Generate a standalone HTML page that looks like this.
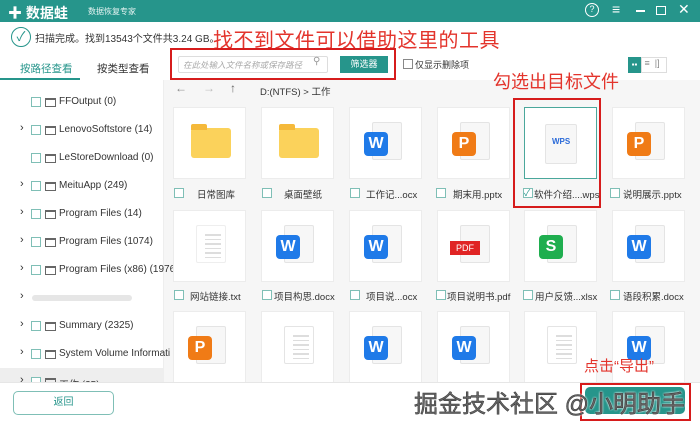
<!DOCTYPE html>
<html><head><meta charset="utf-8"><style>
*{margin:0;padding:0;box-sizing:border-box}
body{width:700px;height:425px;overflow:hidden;position:relative;font-family:"Liberation Sans","Noto Sans CJK SC",sans-serif;background:#fff;font-size:10px;color:#333}
.a{position:absolute}
.hdr{left:0;top:0;width:700px;height:22px;background:#26958b}
.cb{position:absolute;width:10px;height:10px;border:1px solid #7fbfb6;background:#fff}
.card{position:absolute;width:73px;height:72px;background:#fff;border:1px solid #ececec}
.lbl{position:absolute;font-size:9.5px;color:#333;white-space:nowrap}
.doc{position:absolute;left:22px;top:14px;width:30px;height:38px;background:#f7f7f7;border:1px solid #e4e4e4;border-radius:2px}
.ic{position:absolute;left:14px;top:24px;width:24px;height:24px;border-radius:4px;color:#fff;font-size:16px;font-weight:bold;text-align:center;line-height:24px}
.w{background:#1f7ae8}.p{background:#f07b16}.s{background:#1fae4f}
.fold{position:absolute;left:17px;top:20px;width:40px;height:30px;background:#fbd25b;border-radius:3px}
.fold:before{content:"";position:absolute;left:0;top:-4px;width:16px;height:6px;background:#f5b93a;border-radius:2px 2px 0 0}
.si{position:absolute;left:0;width:163px;height:28px;font-size:10px;color:#333}
.si .cb{left:31px;top:9px}
.si .fd{position:absolute;left:45px;top:10px;width:11px;height:9px;border:1px solid #666;border-top-width:2px}
.si span{position:absolute;left:59px;top:8px;white-space:nowrap}
.si b{position:absolute;left:20px;top:6px;font-weight:normal;font-size:11px}
.red{color:#e3342c;z-index:5}
.rb{position:absolute;border:2.5px solid #d61c1c;z-index:5}
.lines{position:absolute;left:8px;top:8px;width:16px}
.lines i{display:block;height:1.5px;background:#ddd;margin-bottom:3px}
</style></head><body>
<div class="a hdr"></div>
<div class="a" style="left:8px;top:3px;color:#fff;font-size:14px;font-weight:bold">✚ 数据蛙</div>
<div class="a" style="left:88px;top:6px;color:#e6f4f2;font-size:8px">数据恢复专家</div>
<div class="a" style="left:585px;top:3px;width:14px;height:14px;border:1.5px solid #fff;border-radius:50%;color:#fff;font-size:9px;text-align:center;line-height:11px">?</div>
<div class="a" style="left:612px;top:1px;color:#fff;font-size:14px">≡</div>
<div class="a" style="left:636px;top:10px;width:9px;height:1.5px;background:#fff"></div>
<div class="a" style="left:656px;top:6px;width:10px;height:9px;border:1.5px solid #fff"></div>
<div class="a" style="left:678px;top:1px;color:#fff;font-size:14px">✕</div>

<div class="a" style="left:11px;top:27px;width:20px;height:20px;border:1.5px solid #26958b;border-radius:50%;color:#26958b;text-align:center;font-size:13px;line-height:18px">✓</div>
<div class="a" style="left:35px;top:30px;font-size:10px">扫描完成。找到13543个文件共3.24 GB。</div>
<div class="a red" style="left:213px;top:24px;font-size:20px;letter-spacing:0.5px">找不到文件可以借助这里的工具</div>

<div class="a" style="left:20px;top:61px;color:#26958b;font-size:10.5px">按路径查看</div>
<div class="a" style="left:97px;top:61px;font-size:10.5px">按类型查看</div>
<div class="a" style="left:0;top:78px;width:80px;height:2px;background:#26958b"></div>
<div class="a" style="left:163px;top:80px;width:1px;height:303px;background:#eee"></div>

<div class="a" style="left:178px;top:56px;width:150px;height:17px;border:1px solid #ddd;border-radius:2px;background:#fff"></div>
<div class="a" style="left:183px;top:59px;font-size:8.5px;color:#aaa;font-style:italic">在此处输入文件名称或保存路径</div>
<div class="a" style="left:313px;top:56px;font-size:10px;color:#999">⚲</div>
<div class="a" style="left:340px;top:56px;width:48px;height:17px;background:#26958b;color:#fff;font-size:9px;text-align:center;line-height:17px">筛选器</div>
<div class="a cb" style="left:403px;top:59px;border-color:#888"></div>
<div class="a" style="left:415px;top:58px;font-size:9px">仅显示删除项</div>
<div class="a" style="left:628px;top:57px;width:13px;height:16px;background:#26958b;color:#fff;font-size:8px;text-align:center;line-height:16px">▪▪</div>
<div class="a" style="left:641px;top:57px;width:26px;height:16px;border:1px solid #ddd;font-size:9px;color:#888">&nbsp;≡&nbsp;&nbsp;|]</div>
<div class="rb" style="left:170px;top:48px;width:226px;height:32px"></div>

<div class="a" style="left:164px;top:80px;width:536px;height:303px;background:#f6f6f6"></div>
<div class="a red" style="left:493px;top:68px;font-size:18px">勾选出目标文件</div>
<div class="a" style="left:175px;top:81px;color:#888;font-size:12px">←</div>
<div class="a" style="left:203px;top:81px;color:#bbb;font-size:12px">→</div>
<div class="a" style="left:230px;top:81px;color:#666;font-size:12px">↑</div>
<div class="a" style="left:260px;top:84px;font-size:9.5px">D:(NTFS) &gt; 工作</div>

<!-- sidebar -->
<div class="si" style="top:88px"><div class="cb"></div><div class="fd"></div><span>FFOutput (0)</span></div>
<div class="si" style="top:116px"><b>›</b><div class="cb"></div><div class="fd"></div><span>LenovoSoftstore (14)</span></div>
<div class="si" style="top:144px"><div class="cb"></div><div class="fd"></div><span>LeStoreDownload (0)</span></div>
<div class="si" style="top:172px"><b>›</b><div class="cb"></div><div class="fd"></div><span>MeituApp (249)</span></div>
<div class="si" style="top:200px"><b>›</b><div class="cb"></div><div class="fd"></div><span>Program Files (14)</span></div>
<div class="si" style="top:228px"><b>›</b><div class="cb"></div><div class="fd"></div><span>Program Files (1074)</span></div>
<div class="si" style="top:256px"><b>›</b><div class="cb"></div><div class="fd"></div><span>Program Files (x86) (1976</span></div>
<div class="si" style="top:284px"><b>›</b><div class="a" style="left:32px;top:11px;width:100px;height:6px;background:#e6e6e6;border-radius:3px"></div></div>
<div class="si" style="top:312px"><b>›</b><div class="cb"></div><div class="fd"></div><span>Summary (2325)</span></div>
<div class="si" style="top:340px"><b>›</b><div class="cb"></div><div class="fd"></div><span>System Volume Informati</span></div>
<div class="si" style="top:368px;background:#eee"><b>›</b><div class="cb"></div><div class="fd"></div><span>工作 (35)</span></div>

<!-- row1 -->
<div class="card" style="left:173px;top:107px"><div class="fold"></div></div>
<div class="card" style="left:261px;top:107px"><div class="fold"></div></div>
<div class="card" style="left:349px;top:107px"><div class="doc"></div><div class="ic w">W</div></div>
<div class="card" style="left:437px;top:107px"><div class="doc"></div><div class="ic p">P</div></div>
<div class="card" style="left:524px;top:107px;border:1.5px solid #4aa79b"><div class="doc" style="left:20px;top:16px;width:32px;height:40px"><div style="color:#2a6ad8;font-size:8px;font-weight:bold;margin:12px 0 0 6px">WPS</div></div></div>
<div class="card" style="left:612px;top:107px"><div class="doc"></div><div class="ic p">P</div></div>
<div class="cb" style="left:174px;top:188px"></div><div class="lbl" style="left:197px;top:187px">日常图库</div>
<div class="cb" style="left:262px;top:188px"></div><div class="lbl" style="left:284px;top:187px">桌面壁纸</div>
<div class="cb" style="left:350px;top:188px"></div><div class="lbl" style="left:366px;top:187px">工作记...ocx</div>
<div class="cb" style="left:436px;top:188px"></div><div class="lbl" style="left:453px;top:187px">期末用.pptx</div>
<div class="cb" style="left:523px;top:188px;font-size:9px;line-height:8px;color:#26958b">✓</div><div class="lbl" style="left:534px;top:187px">软件介绍....wps</div>
<div class="cb" style="left:610px;top:188px"></div><div class="lbl" style="left:623px;top:187px">说明展示.pptx</div>
<div class="rb" style="left:513px;top:98px;width:88px;height:110px"></div>
<!-- row2 -->
<div class="card" style="left:173px;top:210px"><div class="doc" style="background:#fff;border-color:#eee"><div class="lines"><i></i><i></i><i></i><i></i><i></i><i></i></div></div></div>
<div class="card" style="left:261px;top:210px"><div class="doc"></div><div class="ic w">W</div></div>
<div class="card" style="left:349px;top:210px"><div class="doc"></div><div class="ic w">W</div></div>
<div class="card" style="left:437px;top:210px"><div class="doc"></div><div class="a" style="left:12px;top:30px;width:30px;height:14px;background:#e02424;color:#fff;font-size:9px;text-align:center;line-height:14px">PDF</div></div>
<div class="card" style="left:524px;top:210px"><div class="doc"></div><div class="ic s">S</div></div>
<div class="card" style="left:612px;top:210px"><div class="doc"></div><div class="ic w">W</div></div>
<div class="cb" style="left:174px;top:290px"></div><div class="lbl" style="left:190px;top:289px">网站链接.txt</div>
<div class="cb" style="left:262px;top:290px"></div><div class="lbl" style="left:274px;top:289px">项目构思.docx</div>
<div class="cb" style="left:350px;top:290px"></div><div class="lbl" style="left:366px;top:289px">项目说...ocx</div>
<div class="cb" style="left:436px;top:290px"></div><div class="lbl" style="left:447px;top:289px">项目说明书.pdf</div>
<div class="cb" style="left:523px;top:290px"></div><div class="lbl" style="left:535px;top:289px">用户反馈...xlsx</div>
<div class="cb" style="left:610px;top:290px"></div><div class="lbl" style="left:623px;top:289px">语段积累.docx</div>
<!-- row3 -->
<div class="card" style="left:173px;top:311px;height:72px"><div class="doc"></div><div class="ic p">P</div></div>
<div class="card" style="left:261px;top:311px;height:72px"><div class="doc" style="background:#fff"><div class="lines"><i></i><i></i><i></i><i></i><i></i><i></i></div></div></div>
<div class="card" style="left:349px;top:311px;height:72px"><div class="doc"></div><div class="ic w">W</div></div>
<div class="card" style="left:437px;top:311px;height:72px"><div class="doc"></div><div class="ic w">W</div></div>
<div class="card" style="left:524px;top:311px;height:72px"><div class="doc" style="background:#fff"><div class="lines"><i></i><i></i><i></i><i></i><i></i><i></i></div></div></div>
<div class="card" style="left:612px;top:311px;height:72px"><div class="doc"></div><div class="ic w">W</div></div>

<div class="a" style="left:0;top:382px;width:700px;height:43px;background:#fff;border-top:1px solid #e6e6e6"></div>
<div class="a" style="left:13px;top:391px;width:101px;height:24px;border:1px solid #7fbfb6;border-radius:5px;background:#fff"></div>
<div class="a" style="left:13px;top:391px;width:101px;height:24px;text-align:center;line-height:24px;color:#26958b;font-size:10px">返回</div>
<div class="a" style="left:585px;top:387px;width:100px;height:27px;background:#26958b;border-radius:5px"></div>
<div class="a red" style="left:584px;top:355px;font-size:15px">点击“导出”</div>
<div class="rb" style="left:580px;top:383px;width:111px;height:38px"></div>
<div class="a" style="left:414px;top:384px;font-size:24px;color:#666;-webkit-text-stroke:0.5px #333;text-shadow:0 0 2px #fff,0 0 2px #fff;z-index:6;white-space:nowrap">掘金技术社区 @小明助手</div>
</body></html>
